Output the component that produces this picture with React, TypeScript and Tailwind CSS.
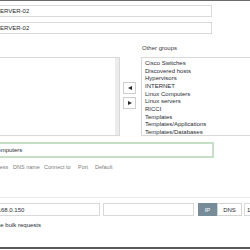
import React from "react";

const groups = [
  "Cisco Switches",
  "Discovered hosts",
  "Hypervisors",
  "INTERNET",
  "Linux Computers",
  "Linux servers",
  "RICCI",
  "Templates",
  "Templates/Applications",
  "Templates/Databases",
];

function Tri({ dir }: { dir: "left" | "right" }) {
  return (
    <svg width="4" height="4" viewBox="0 0 4 4">
      {dir === "left" ? (
        <polygon points="4,0 4,4 0,2" fill="#2b2b2b" />
      ) : (
        <polygon points="0,0 0,4 4,2" fill="#2b2b2b" />
      )}
    </svg>
  );
}

export default function App() {
  return (
    <div className="w-[250px] h-[250px] overflow-hidden bg-white font-['Liberation_Sans',Arial,sans-serif] text-[6px] leading-none text-[#1f2c33] flex flex-col">
      <div className="h-px w-full shrink-0 bg-[#6b6b6b]" />
      <div className="-ml-[20px] w-[450px] flex flex-col shrink-0">
        <div className="mt-[4px] h-[12px] w-[232px] border border-[#d9d9d9] flex items-center pl-[15px]">
          SERVER-02
        </div>
        <div className="mt-[5px] h-[12px] w-[232px] border border-[#d9d9d9] flex items-center pl-[15px]">
          SERVER-02
        </div>
        <div className="mt-[10px] h-[7px] flex items-center pl-[162px] text-[#3a3a3a]">
          Other groups
        </div>
        <div className="mt-[6px] h-[79px] flex">
          <div className="w-[140px] shrink-0 h-full border border-[#d9d9d9] flex">
            <div className="flex-1" />
            <div className="w-[4px] h-full bg-[#ececec]" />
          </div>
          <div className="ml-[3px] shrink-0 flex flex-col pt-[25px] gap-[3px]">
            <div className="w-[13px] h-[12px] border border-[#cfcfcf] bg-white flex items-center justify-center">
              <Tri dir="left" />
            </div>
            <div className="w-[13px] h-[12px] border border-[#cfcfcf] bg-white flex items-center justify-center">
              <Tri dir="right" />
            </div>
          </div>
          <div className="ml-[5px] shrink-0 w-[150px] h-full border border-[#d9d9d9] pt-[2px] pl-[3px] flex flex-col">
            {groups.map((g) => (
              <div key={g} className="leading-[7.67px] h-[7.67px] whitespace-nowrap">
                {g}
              </div>
            ))}
          </div>
        </div>
        <div className="mt-[6px] h-[16px] w-[234px] border-2 border-[#c6dfc6] flex items-center pl-[11px]">
          Computers
        </div>
        <div className="mt-[6px] h-[7px] flex items-center pl-[2px] text-[5.5px] text-[#7d7d7d] whitespace-nowrap">
          <span className="w-[31px] shrink-0">IP address</span>
          <span className="w-[31px] shrink-0">DNS name</span>
          <span className="w-[34px] shrink-0">Connect to</span>
          <span className="w-[17px] shrink-0">Port</span>
          <span>Default</span>
        </div>
      </div>
      <div className="mt-[26px] h-px w-full shrink-0 bg-[#ebebeb]" />
      <div className="-ml-[20px] w-[450px] flex flex-col shrink-0">
        <div className="mt-[5px] h-[13px] flex">
          <div className="w-[120px] shrink-0 h-full border border-[#d9d9d9] flex items-center pl-[5px]">
            192.168.0.150
          </div>
          <div className="ml-[3px] shrink-0 w-[91px] h-full border border-[#d9d9d9]" />
          <div className="ml-[4px] shrink-0 w-[19px] h-full bg-[#768d99] text-white flex items-center justify-center">
            IP
          </div>
          <div className="w-[25px] shrink-0 h-full border border-[#d4d4d4] bg-white flex items-center justify-center">
            DNS
          </div>
          <div className="ml-[2px] shrink-0 w-[60px] h-full border border-[#d9d9d9] flex items-center pl-[2px]">
            10050
          </div>
        </div>
        <div className="mt-[5px] h-[7px] flex items-center pl-[13px] whitespace-nowrap">
          Use bulk requests
        </div>
      </div>
      <div className="mt-[19px] h-[2px] w-full shrink-0 bg-[#5a5a5a]" />
    </div>
  );
}
